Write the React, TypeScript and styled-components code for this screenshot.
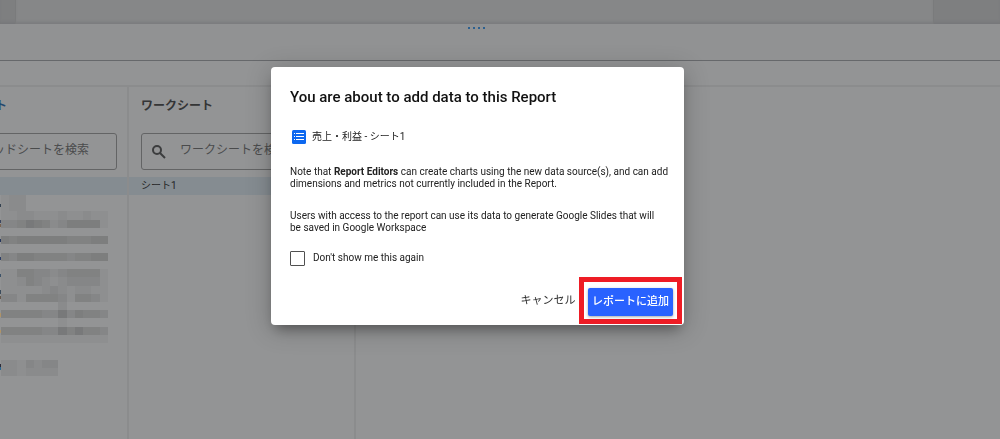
import React from "react";
import styled, { createGlobalStyle } from "styled-components";

const Global = createGlobalStyle`
  * { box-sizing: border-box; }
  body {
    margin: 0;
    overflow: hidden;
    background: #939495;
    color: #303132;
    font-family: Roboto, "Noto Sans CJK JP", sans-serif;
  }
`;

const Page = styled.div`
  display: flex;
  flex-direction: column;
  height: 100vh;
  min-width: 0;
`;

const CanvasStrip = styled.div`
  flex: none;
  height: 24px;
  padding: 0 66px 0 15px;
  background: #7e7f80;
  box-shadow: inset 0 -3px 3px -1px #77787a;
`;

const Sheet = styled.div`
  height: 100%;
  background: #868788;
  border: solid #7a7b7c;
  border-width: 0 1px;
  box-shadow: inset 0 -3px 3px -1px #7b7c7e;
`;

const PanelHeader = styled.header`
  flex: none;
  height: 37px;
  padding: 3px 47px 0 0;
  background: #919293;
  border-bottom: 1px solid #66686b;
  display: flex;
  justify-content: center;
`;

const DragHandle = styled.div`
  display: flex;
  gap: 3px;
  height: 2px;
`;

const Dot = styled.span`
  width: 2px;
  height: 2px;
  background: #2c608f;
`;

const Toolbar = styled.div`
  flex: none;
  height: 26px;
  border-bottom: 2px solid #8b8c8d;
`;

const Columns = styled.main`
  flex: 1;
  min-height: 0;
  display: flex;
`;

const Column = styled.section<{ $width?: number }>`
  flex: ${(p) => (p.$width ? `0 0 ${p.$width}px` : "1")};
  min-width: 0;
  overflow: hidden;
  border-right: ${(p) => (p.$width ? "2px solid #8b8c8d" : "none")};
`;

const ColumnTitle = styled.h2`
  display: flex;
  height: 46px;
  padding: 9px 12px 0;
  margin: 0;
  font-size: 12px;
  line-height: 20px;
  font-weight: 700;
  white-space: nowrap;
  color: #343536;
`;

const ClippedTitle = styled(ColumnTitle)`
  width: 7px;
  padding: 9px 0 0;
  justify-content: flex-end;
  color: #23496f;
`;

const SearchBox = styled.label<{ $clipped?: boolean }>`
  display: flex;
  align-items: center;
  gap: 13px;
  height: 37px;
  margin: 0 ${(p) => (p.$clipped ? 10 : 12)}px 0 ${(p) => (p.$clipped ? -4 : 12)}px;
  padding-left: ${(p) => (p.$clipped ? 0 : 9)}px;
  border: 1px solid #636465;
  border-radius: 3px;
`;

const SearchInput = styled.input<{ $clipped?: boolean }>`
  flex: 1;
  min-width: 0;
  padding: 0 0 4px;
  margin-left: ${(p) => (p.$clipped ? -4 : 0)}px;
  border: 0;
  outline: 0;
  background: transparent;
  font: 12px/20px Roboto, "Noto Sans CJK JP", sans-serif;
  &::placeholder { color: #4a4b4c; opacity: 1; }
`;

const List = styled.div`
  margin-top: 7px;
`;

const ListItem = styled.button`
  display: block;
  width: 100%;
  height: 18px;
  padding: 0 12px;
  border: 0;
  background: #858c91;
  color: #242526;
  font: 10px/16px Roboto, "Noto Sans CJK JP", sans-serif;
  text-align: left;
`;

const Mosaic = styled.svg`
  display: block;
  width: 116px;
  height: 181px;
`;

const Backdrop = styled.div`
  position: fixed;
  inset: 0;
  display: flex;
  align-items: flex-start;
  justify-content: center;
  padding: 67px 45px 0 0;
`;

const Dialog = styled.div`
  width: 413px;
  padding: 20px 2px 1px 19px;
  background: #fff;
  border-radius: 4px;
  color: #212121;
  box-shadow: 0 8px 12px -5px rgba(0, 0, 0, 0.35), 0 4px 24px 2px rgba(0, 0, 0, 0.2);
`;

const DialogTitle = styled.h1`
  margin: 0 0 20px;
  font-size: 15px;
  line-height: 20px;
  font-weight: 500;
  color: #111;
`;

const Source = styled.div`
  display: flex;
  align-items: center;
  gap: 6px;
  height: 20px;
  margin: 0 0 19px 2px;
  font-size: 10px;
  line-height: 20px;
`;

const Note = styled.p`
  margin: 0 0 16px;
  font-size: 10px;
  line-height: 12px;
  & + & { margin-top: 20px; }
`;

const CheckRow = styled.label`
  display: flex;
  align-items: center;
  gap: 8px;
  height: 16px;
  font-size: 10px;
  line-height: 16px;
`;

const Checkbox = styled.input`
  appearance: none;
  width: 15px;
  height: 15px;
  margin: 0;
  border: 1px solid #505050;
  border-radius: 1px;
  background: #fff;
`;

const Actions = styled.div`
  display: flex;
  align-items: center;
  justify-content: flex-end;
  margin-top: 11px;
`;

const Button = styled.button<{ $primary?: boolean }>`
  display: block;
  height: 28px;
  padding: 0;
  width: ${(p) => (p.$primary ? 85 : 62)}px;
  border: 0;
  border-radius: 2px;
  background: ${(p) => (p.$primary ? "#2962ff" : "transparent")};
  color: ${(p) => (p.$primary ? "#fff" : "#303030")};
  box-shadow: ${(p) => (p.$primary ? "0 1px 3px rgba(0,0,0,.35)" : "none")};
  font: ${(p) => (p.$primary ? 500 : 400)} 11px/20px Roboto, "Noto Sans CJK JP", sans-serif;
  white-space: nowrap;
`;

const Highlight = styled.div`
  padding: 6px 4px 3px;
  border: 5px solid #ee1c25;
`;

// Darkness of each tile in the obscured file list; 0 is untouched.
const tiles = [
  "12200000000000",
  "12200000000000",
  "11221112112110",
  "33465423555510",
  "00000000000000",
  "54555555444550",
  "00000000000000",
  "43554444344550",
  "00000000000000",
  "11443323444410",
  "11243212333310",
  "11111232122110",
  "33144443144310",
  "00000002000000",
  "44444336354430",
  "00000001000000",
  "44444336464430",
  "11111111111110",
  "00000000000000",
  "00000000000000",
  "22132330000000",
  "22122220000000",
];

// Slivers of the row icons that show at the left edge: [row, colour].
const slivers: [number, string][] = [
  [1.1, "#33414f"], [3, "#3b4660"], [3.5, "#7a6350"], [5.3, "#26365c"], [7.5, "#2b3c66"],
  [9.6, "#3c5268"], [11.6, "#3b4c5c"], [12.3, "#66584c"], [14.4, "#b09468"],
  [16.4, "#b09468"], [20.6, "#2c2a38"], [20.9, "#2a6690"],
];

function HiddenFiles() {
  return (
    <Mosaic viewBox="-0.12 0 14.12 22" preserveAspectRatio="none" shapeRendering="crispEdges" aria-hidden="true">
      {slivers.map(([y, fill]) => (
        <rect key={y} x="-0.12" y={y} width="0.12" height="0.4" fill={fill} />
      ))}
      {tiles.map((row, y) =>
        [...row].map((v, x) =>
          v === "0" ? null : <rect key={`${x}-${y}`} x={x} y={y} width="1" height="1" fillOpacity={Number(v) * 0.03} />
        )
      )}
    </Mosaic>
  );
}

function SearchIcon() {
  return (
    <svg width="16" height="16" viewBox="0 0 16 16" fill="none" stroke="#3c3d3e" strokeWidth="2" aria-hidden="true">
      <circle cx="6" cy="6" r="4" />
      <path d="M9 9L14 14" />
    </svg>
  );
}

function SourceIcon() {
  return (
    <svg width="14" height="14" viewBox="0 0 14 14" aria-hidden="true">
      <rect width="14" height="14" rx="1.5" fill="#0d68f0" />
      <path
        d="M2 3.5h1M2 6.5h1M2 9.5h1M4 3.5h8M4 6.5h8M4 9.5h8"
        stroke="#fff"
        strokeWidth="1"
        shapeRendering="crispEdges"
      />
    </svg>
  );
}

export default function App() {
  return (
    <>
      <Global />
      <Page>
        <CanvasStrip><Sheet /></CanvasStrip>
        <PanelHeader>
          <DragHandle><Dot /><Dot /><Dot /><Dot /></DragHandle>
        </PanelHeader>
        <Toolbar />
        <Columns>
          <Column $width={129}>
            <ClippedTitle>ト</ClippedTitle>
            <SearchBox $clipped>
              <SearchInput $clipped placeholder="ッドシートを検索" aria-label="スプレッドシートを検索" />
            </SearchBox>
            <List>
              <ListItem aria-label="選択中" />
              <HiddenFiles />
            </List>
          </Column>
          <Column $width={227}>
            <ColumnTitle>ワークシート</ColumnTitle>
            <SearchBox>
              <SearchIcon />
              <SearchInput placeholder="ワークシートを検索" aria-label="ワークシートを検索" />
            </SearchBox>
            <List><ListItem>シート1</ListItem></List>
          </Column>
          <Column />
        </Columns>
      </Page>
      <Backdrop>
        <Dialog role="dialog" aria-modal="true" aria-labelledby="dialog-title">
          <DialogTitle id="dialog-title">You are about to add data to this Report</DialogTitle>
          <Source><SourceIcon />売上・利益 - シート1</Source>
          <Note>
            Note that <b>Report Editors</b> can create charts using the new data source(s), and can add
            <br />dimensions and metrics not currently included in the Report.
          </Note>
          <Note>
            Users with access to the report can use its data to generate Google Slides that will
            <br />be saved in Google Workspace
          </Note>
          <CheckRow><Checkbox type="checkbox" />Don't show me this again</CheckRow>
          <Actions>
            <Button type="button">キャンセル</Button>
            <Highlight><Button type="button" $primary>レポートに追加</Button></Highlight>
          </Actions>
        </Dialog>
      </Backdrop>
    </>
  );
}
